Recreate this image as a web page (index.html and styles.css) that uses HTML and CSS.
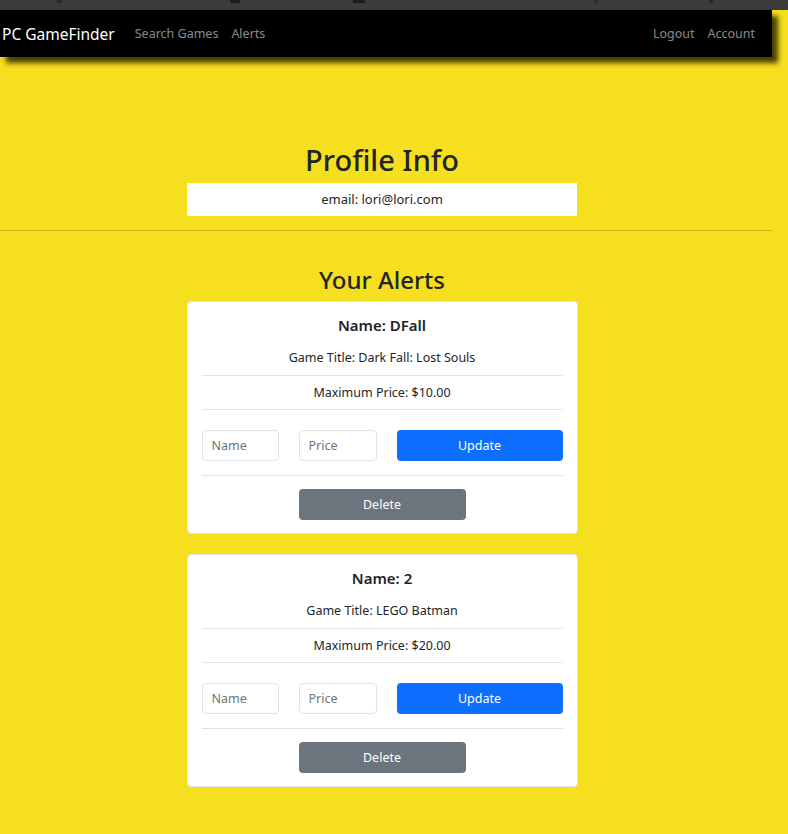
FILE: index.html
```html
<!DOCTYPE html>
<html lang="en">
<head>
<meta charset="utf-8">
<title>PC GameFinder</title>
<link rel="stylesheet" href="styles.css">
</head>
<body>
<div class="topstrip">
  <span class="mark m1"></span><span class="mark m2"></span><span class="mark m3"></span><span class="mark m4"></span><span class="mark m5"></span>
</div>
<div class="page">
  <nav class="navbar">
    <a class="brand">PC GameFinder</a>
    <a class="nav-link">Search Games</a>
    <a class="nav-link">Alerts</a>
    <span class="spacer"></span>
    <a class="nav-link">Logout</a>
    <a class="nav-link last">Account</a>
  </nav>
  <main class="main">
    <h1 class="title">Profile Info</h1>
    <div class="email-box">email: lori@lori.com</div>
  </main>
  <hr class="divider">
  <main class="main">
    <h2 class="subtitle">Your Alerts</h2>
    <div class="card">
      <h5 class="card-name">Name: DFall</h5>
      <div class="card-line first">Game Title: Dark Fall: Lost Souls</div>
      <div class="card-line">Maximum Price: $10.00</div>
      <div class="form-row">
        <input class="field" placeholder="Name">
        <input class="field" placeholder="Price">
        <button class="btn btn-primary">Update</button>
      </div>
      <div class="delete-row"><button class="btn btn-secondary">Delete</button></div>
    </div>
    <div class="card">
      <h5 class="card-name">Name: 2</h5>
      <div class="card-line first">Game Title: LEGO Batman</div>
      <div class="card-line">Maximum Price: $20.00</div>
      <div class="form-row">
        <input class="field" placeholder="Name">
        <input class="field" placeholder="Price">
        <button class="btn btn-primary">Update</button>
      </div>
      <div class="delete-row"><button class="btn btn-secondary">Delete</button></div>
    </div>
  </main>
</div>
</body>
</html>
```

FILE: styles.css
```css
* { box-sizing: border-box; }
html, body { margin: 0; padding: 0; }
body {
  background: #f6df1f;
  font-family: "Noto Sans", "Open Sans", sans-serif;
  color: #212529;
  height: 834px;
  overflow: hidden;
}
.topstrip {
  height: 10px;
  background: #3b3b3b;
  position: relative;
}
.mark { position: absolute; bottom: 7px; height: 3px; background: #1c1c1c; }
.m1 { left: 57px; width: 5px; background: #2a2a2a; }
.m2 { left: 230px; width: 10px; }
.m3 { left: 353px; width: 12px; }
.m4 { left: 594px; width: 3px; background: #2a2a2a; }
.m5 { left: 709px; width: 4px; background: #2a2a2a; }

.page { width: 772px; }
.navbar {
  height: 47px;
  background: #000;
  display: flex;
  align-items: center;
  padding: 0 0 0 2px;
  box-shadow: 6px 6px 5px rgba(40, 35, 0, 0.85);
  position: relative;
  z-index: 1;
}
.brand {
  color: #fff;
  font-size: 15.5px;
  margin-right: 20px;
}
.nav-link {
  color: rgba(255,255,255,0.55);
  font-size: 12.5px;
  margin-right: 13px;
}
.nav-link.last { margin-right: 17px; }
.spacer { flex: 1; }

.main {
  width: 764px;
  display: flex;
  flex-direction: column;
  align-items: center;
}
.title {
  margin: 84px 0 4px;
  font-size: 29px;
  font-weight: 500;
  line-height: 38px;
  height: 38px;
}
.email-box {
  width: 390px;
  height: 33px;
  background: #fff;
  text-align: center;
  line-height: 33px;
  font-size: 13px;
}
.divider {
  margin: 14px 0 0;
  border: 0;
  border-top: 1px solid #c9b62a;
  width: 772px;
}
.subtitle {
  margin: 32px 0 4px;
  font-size: 24px;
  font-weight: 500;
  line-height: 34px;
  height: 34px;
}
.card {
  width: 391px;
  background: #fff;
  border: 1px solid #e3e3e3;
  border-radius: 4px;
  padding: 13px 14px 13px;
  margin-bottom: 20px;
}
.card-name {
  margin: 0;
  font-size: 15px;
  font-weight: 600;
  line-height: 20px;
  text-align: center;
}
.card-line {
  font-size: 12.5px;
  line-height: 20px;
  text-align: center;
  padding: 7px 0 6px;
  border-bottom: 1px solid #e5e5e5;
}
.card-line.first { padding-top: 13px; padding-bottom: 7px; }
.form-row {
  display: grid;
  grid-template-columns: 77px 78px 1fr;
  column-gap: 20px;
  padding: 20px 0 14px;
  border-bottom: 1px solid #dfe2e6;
}
.field {
  height: 31px;
  border: 1px solid #dee2e6;
  border-radius: 4px;
  padding: 0 9px;
  font-family: inherit;
  font-size: 12.5px;
  color: #212529;
  width: 100%;
  min-width: 0;
}
.field::placeholder { color: #6c757d; }
.btn {
  height: 31px;
  border: 0;
  border-radius: 4px;
  color: #fff;
  font-family: inherit;
  font-size: 12.5px;
}
.btn-primary { background: #0d6efd; }
.btn-secondary { background: #6c757d; width: 167px; }
.delete-row {
  display: flex;
  justify-content: center;
  padding-top: 13px;
}
```
